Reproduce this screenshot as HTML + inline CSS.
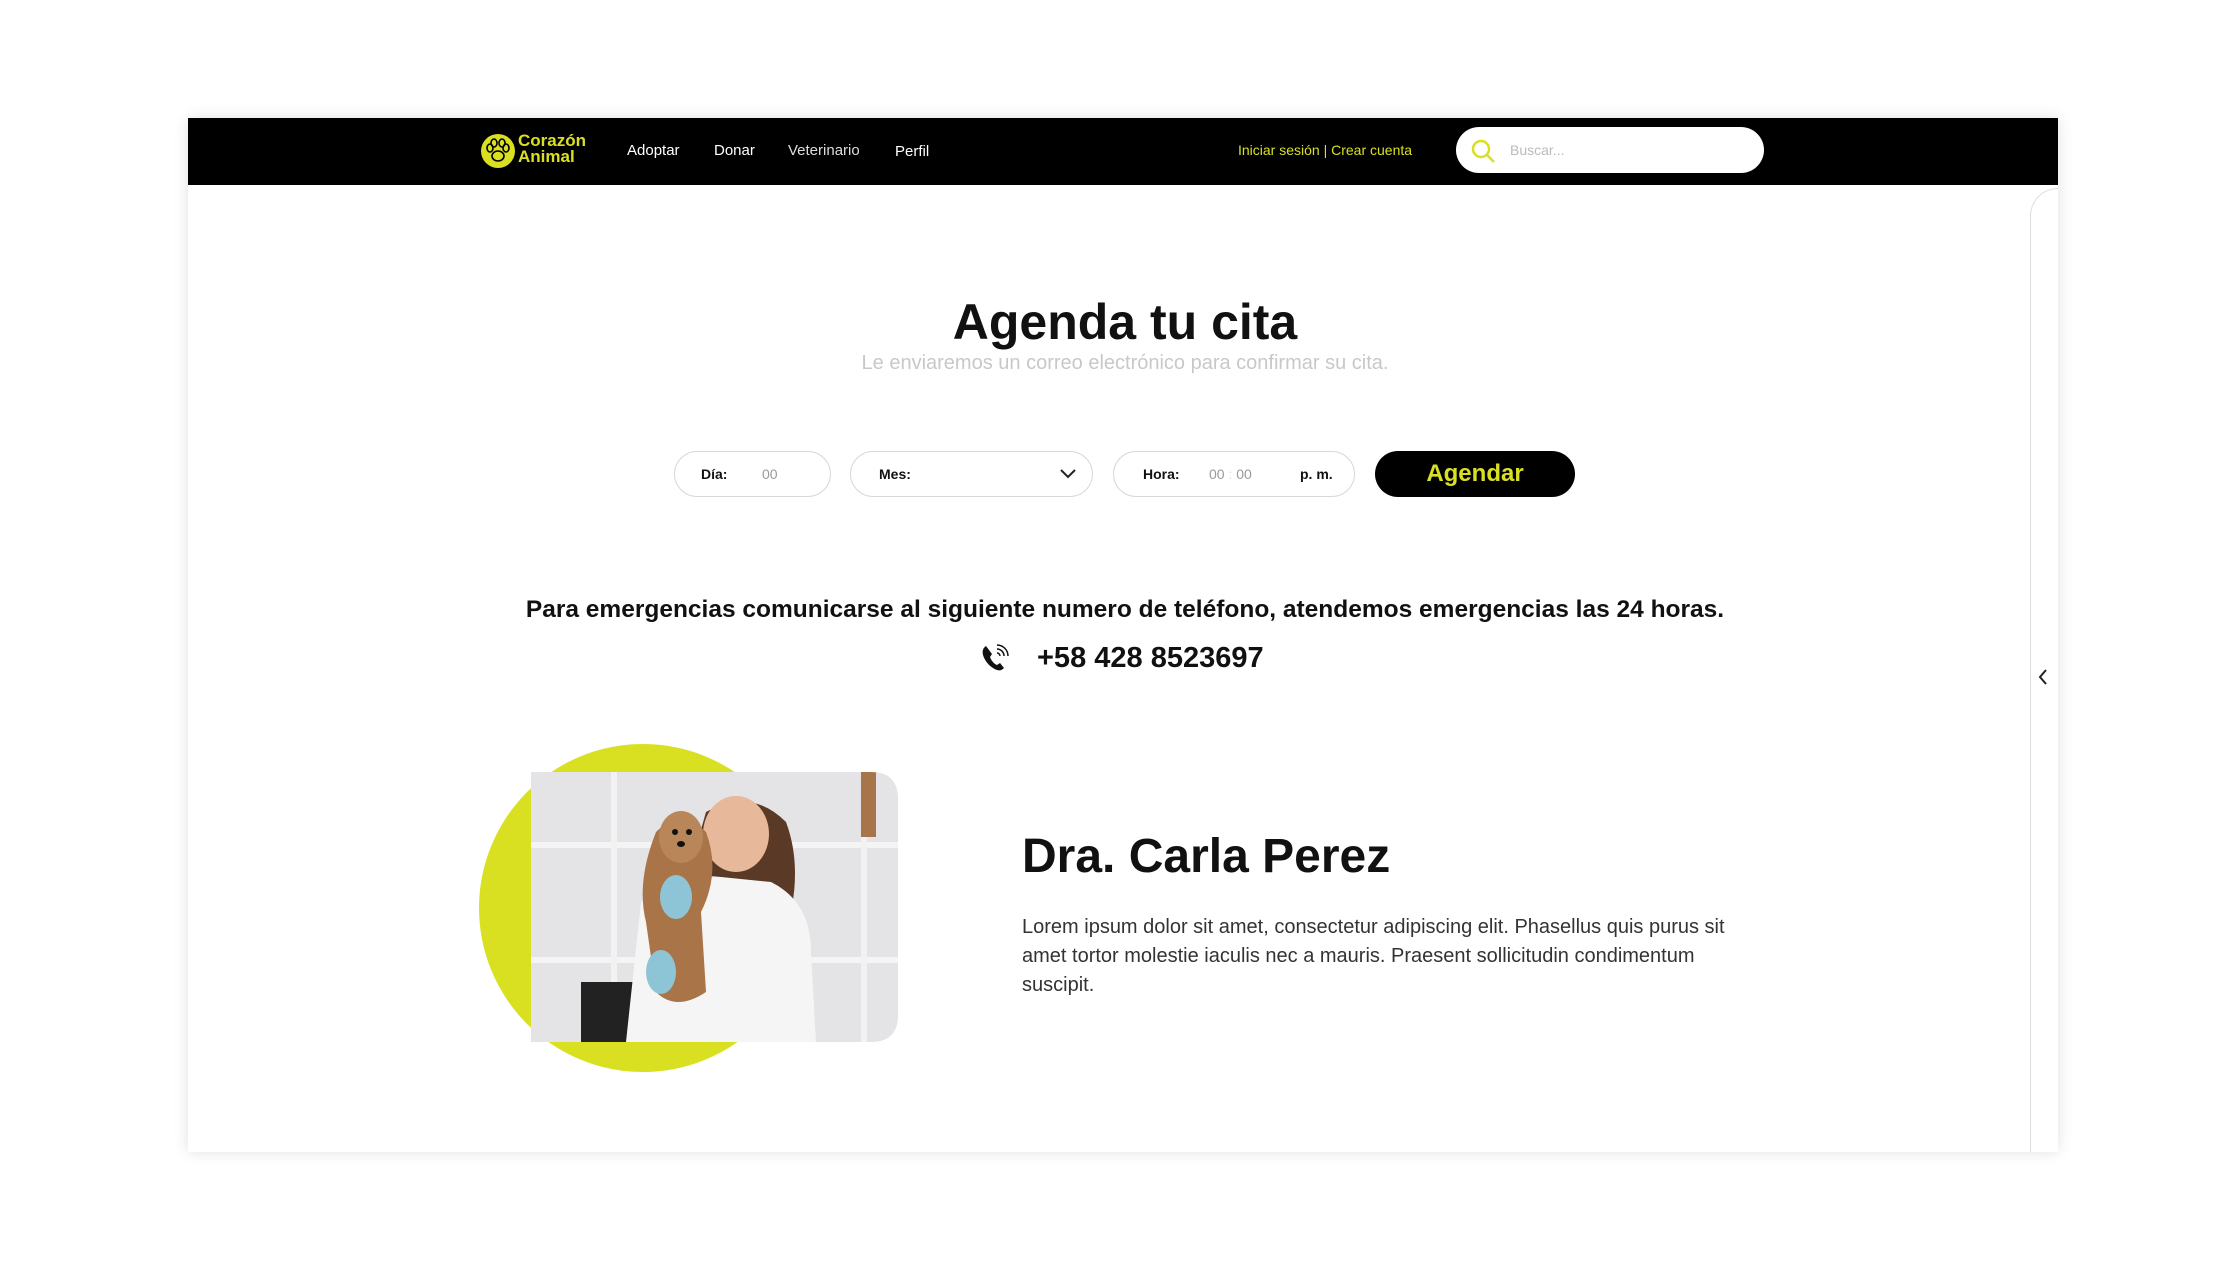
<!DOCTYPE html>
<html><head><meta charset="utf-8"><style>
*{margin:0;padding:0;box-sizing:border-box}
body{width:2239px;height:1266px;background:#fff;position:relative;overflow:hidden;font-family:"Liberation Sans",sans-serif;color:#111}
.frame{position:absolute;left:188px;top:118px;width:1870px;height:1034px;background:#fff;box-shadow:0 0 14px rgba(0,0,0,.12)}
.nav{position:absolute;left:188px;top:118px;width:1870px;height:67px;background:#000}
.a{position:absolute;white-space:nowrap}
.nl{color:#fff;font-size:15px;top:142px}
.pill{position:absolute;top:451px;height:46px;border:1px solid #d8d8d8;border-radius:23px;background:#fff;font-size:14px}
.pill span{position:absolute;top:14px}
</style></head><body>
<div class="frame"></div>
<div class="nav"></div>
<svg class="a" style="left:481px;top:134px" width="34" height="34" viewBox="0 0 34 34"><circle cx="17" cy="17" r="17" fill="#d9e021"/><g fill="none" stroke="#000" stroke-width="1.6"><ellipse cx="17" cy="22" rx="6" ry="5"/><ellipse cx="9" cy="14" rx="3" ry="4"/><ellipse cx="25" cy="14" rx="3" ry="4"/><ellipse cx="13" cy="9" rx="3" ry="4"/><ellipse cx="21" cy="9" rx="3" ry="4"/></g></svg>
<div class="a" style="left:518px;top:133px;color:#d9e021;font-size:17px;line-height:16px;font-weight:bold">Corazón<br>Animal</div>
<div class="a nl" style="left:627px">Adoptar</div>
<div class="a nl" style="left:714px">Donar</div>
<div class="a nl" style="left:788px;color:#ddd">Veterinario</div>
<div class="a nl" style="left:895px;top:143px">Perfil</div>
<div class="a" style="left:1238px;top:142px;color:#d9e021;font-size:14px">Iniciar sesión | Crear cuenta</div>
<div class="a" style="left:1456px;top:127px;width:308px;height:46px;border-radius:23px;background:#fff"></div>
<svg class="a" style="left:1469px;top:137px" width="28" height="28" viewBox="0 0 28 28"><circle cx="12" cy="12" r="8" fill="none" stroke="#d9e021" stroke-width="2.5"/><path d="M18 18l7 7" stroke="#d9e021" stroke-width="2.5"/></svg>
<div class="a" style="left:1510px;top:142px;color:#bbb;font-size:14px">Buscar...</div>
<div class="a" style="left:2030px;top:188px;width:28px;height:964px;border-left:1px solid #ddd;border-top:1px solid #ddd;border-top-left-radius:28px"></div>
<svg class="a" style="left:2035px;top:667px" width="16" height="20" viewBox="0 0 16 20"><path d="M11 3L5 10l6 7" fill="none" stroke="#222" stroke-width="2"/></svg>
<div class="a" style="left:0;width:2250px;text-align:center;top:293px;font-size:50px;font-weight:bold">Agenda tu cita</div>
<div class="a" style="left:0;width:2250px;text-align:center;top:352px;font-size:20px;color:#c8c8c8">Le enviaremos un correo electrónico para confirmar su cita.</div>
<div class="pill" style="left:674px;width:157px"><span style="left:26px;font-weight:bold">Día:</span><span style="left:87px;color:#999">00</span></div>
<div class="pill" style="left:850px;width:243px"><span style="left:28px;font-weight:bold">Mes:</span><svg class="a" style="left:208px;top:15px" width="18" height="14" viewBox="0 0 18 14"><path d="M2 3l7 7 7-7" fill="none" stroke="#222" stroke-width="2"/></svg></div>
<div class="pill" style="left:1113px;width:242px"><span style="left:29px;font-weight:bold">Hora:</span><span style="left:95px;color:#999">00 <span style="position:static;color:#ddd">:</span> 00</span><span style="left:186px;font-weight:bold">p. m.</span></div>
<div class="a" style="left:1375px;top:451px;width:200px;height:46px;border-radius:23px;background:#000;color:#d9e021;font-size:24px;font-weight:bold;text-align:center;line-height:46px">Agendar</div>
<div class="a" style="left:0;width:2250px;text-align:center;top:596px;font-size:24.5px;font-weight:bold">Para emergencias comunicarse al siguiente numero de teléfono, atendemos emergencias las 24 horas.</div>
<svg class="a" style="left:980px;top:643px" width="30" height="30" viewBox="0 0 30 30"><path d="M6 3c-3 2-4 5-3 9 2 7 8 13 14 15 3 1 5 0 7-2l-4-5-3 2c-3-1-6-5-7-8l2-3z" fill="#111"/><path d="M17 6a7 7 0 0 1 7 7M17 2a11 11 0 0 1 11 11M17 10a3 3 0 0 1 3 3" fill="none" stroke="#111" stroke-width="1.5"/></svg>
<div class="a" style="left:1037px;top:642px;font-size:29px;font-weight:bold">+58 428 8523697</div>
<div class="a" style="left:479px;top:744px;width:328px;height:328px;border-radius:50%;background:#d9e021"></div>
<svg class="a" style="left:531px;top:772px" width="367" height="270" viewBox="0 0 367 270"><defs><clipPath id="c"><path d="M0 0H340Q367 0 367 27V243Q367 270 340 270H0Z"/></clipPath></defs><g clip-path="url(#c)"><rect width="367" height="270" fill="#e4e4e6"/><rect x="0" y="70" width="367" height="6" fill="#f4f4f4"/><rect x="0" y="185" width="367" height="6" fill="#f4f4f4"/><rect x="80" y="0" width="6" height="270" fill="#f2f2f2"/><rect x="330" y="0" width="6" height="270" fill="#f2f2f2"/><rect x="330" y="0" width="15" height="65" fill="#a8744a"/><rect x="50" y="210" width="120" height="60" fill="#222"/><path d="M175 40q45-25 80 10q15 40 5 90l20 130H110z" fill="#5a3a26"/><ellipse cx="205" cy="62" rx="33" ry="38" fill="#e8b89a"/><path d="M110 130q30-30 80-25l50 5q40 20 40 70l5 90H95z" fill="#f5f5f5"/><path d="M125 60q25-25 50 0q15 40-5 80l5 80q-30 20-50 0l-10-70q-10-40 10-90z" fill="#a87448"/><ellipse cx="150" cy="65" rx="22" ry="26" fill="#b9865a"/><circle cx="144" cy="60" r="3" fill="#111"/><circle cx="158" cy="60" r="3" fill="#111"/><ellipse cx="150" cy="72" rx="4" ry="3" fill="#111"/><ellipse cx="145" cy="125" rx="16" ry="22" fill="#8ec5d6"/><ellipse cx="130" cy="200" rx="15" ry="22" fill="#8ec5d6"/></g></svg>
<div class="a" style="left:1022px;top:829px;font-size:48px;font-weight:bold">Dra. Carla Perez</div>
<div class="a" style="left:1022px;top:913px;width:720px;white-space:normal;font-size:20px;line-height:29px;color:#333">Lorem ipsum dolor sit amet, consectetur adipiscing elit. Phasellus quis purus sit amet tortor molestie iaculis nec a mauris. Praesent sollicitudin condimentum suscipit.</div>
</body></html>
